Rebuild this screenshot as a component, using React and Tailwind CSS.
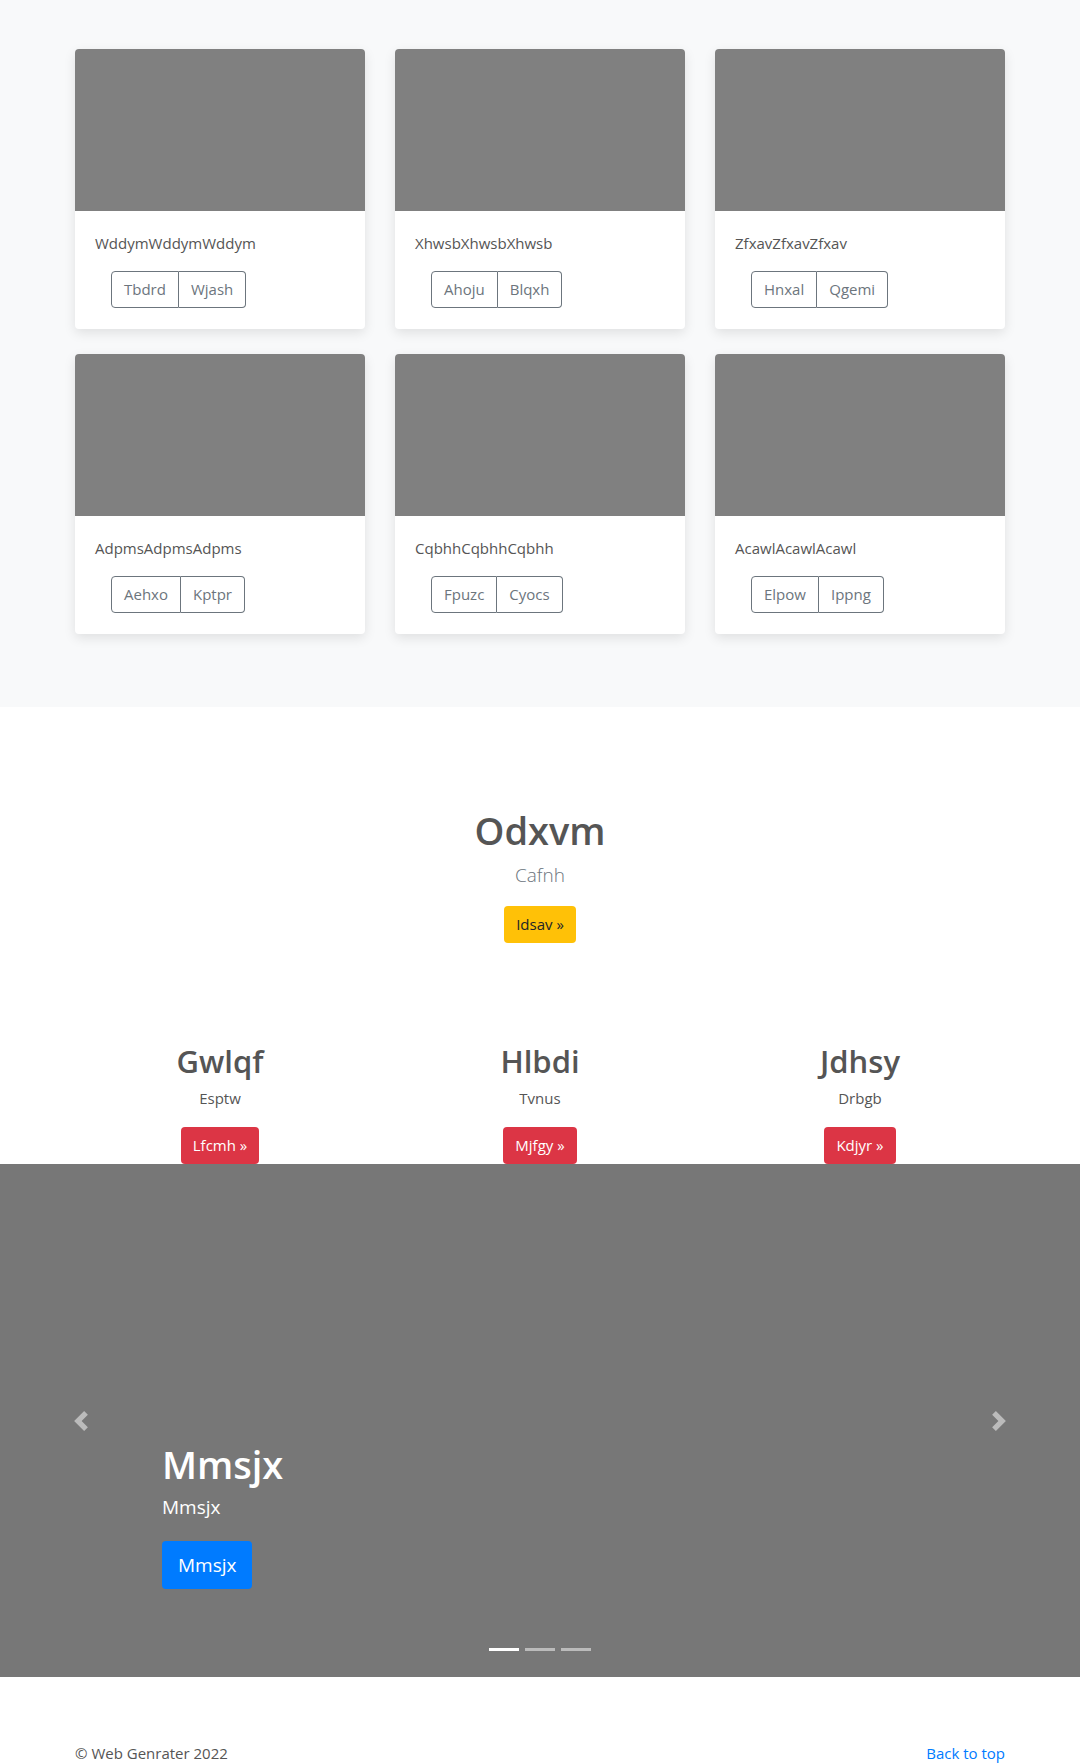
import React from 'react';

const cards = [
  { title: 'WddymWddymWddym', a: 'Tbdrd', b: 'Wjash' },
  { title: 'XhwsbXhwsbXhwsb', a: 'Ahoju', b: 'Blqxh' },
  { title: 'ZfxavZfxavZfxav', a: 'Hnxal', b: 'Qgemi' },
  { title: 'AdpmsAdpmsAdpms', a: 'Aehxo', b: 'Kptpr' },
  { title: 'CqbhhCqbhhCqbhh', a: 'Fpuzc', b: 'Cyocs' },
  { title: 'AcawlAcawlAcawl', a: 'Elpow', b: 'Ippng' },
];

const features = [
  { title: 'Gwlqf', text: 'Esptw', btn: 'Lfcmh' },
  { title: 'Hlbdi', text: 'Tvnus', btn: 'Mjfgy' },
  { title: 'Jdhsy', text: 'Drbgb', btn: 'Kdjyr' },
];

const Card = ({ title, a, b }) => (
  <div className="bg-white rounded overflow-hidden shadow-[0_4px_12px_rgba(0,0,0,0.1)]">
    <div className="h-[162px] bg-[#808080]" />
    <div className="pt-[22px] px-5 pb-[21px]">
      <p className="text-[15px] leading-[21px] text-[#555]">{title}</p>
      <div className="flex mt-[17px] ml-4">
        <button className="h-[37px] px-3 text-[15px] text-[#6c757d] border border-[#6c757d] rounded-l">
          {a}
        </button>
        <button className="h-[37px] px-3 text-[15px] text-[#6c757d] border border-l-0 border-[#6c757d] rounded-r">
          {b}
        </button>
      </div>
    </div>
  </div>
);

const Chevron = ({ right }) => (
  <svg viewBox="0 0 8 8" className="w-5 h-5" fill="rgba(255,255,255,0.5)">
    {right ? (
      <path d="M2.75 0l-1.5 1.5L3.75 4l-2.5 2.5L2.75 8l4-4-4-4z" />
    ) : (
      <path d="M5.25 0l-4 4 4 4 1.5-1.5L4.25 4l2.5-2.5L5.25 0z" />
    )}
  </svg>
);

export default function App() {
  return (
    <div className="font-['Open_Sans',sans-serif] text-[#555] bg-white">
      {/* Album */}
      <section className="bg-[#f8f9fa] pt-[49px] pb-[49px]">
        <div className="w-[960px] mx-auto px-[15px] grid grid-cols-3 gap-x-[30px] gap-y-[25px]">
          {cards.map((c) => (
            <Card key={c.title} {...c} />
          ))}
        </div>
        <div className="h-6" />
      </section>

      {/* Intro */}
      <section className="pt-[99px] text-center">
        <h1 className="text-[38px] leading-[48px] font-semibold text-[#555]">Odxvm</h1>
        <p className="mt-1.5 text-[19px] leading-[30px] font-light text-[#6c757d]">Cafnh</p>
        <button className="mt-4 h-[37px] px-3 rounded bg-[#ffc107] text-[#212529] text-[15px]">
          Idsav &raquo;
        </button>
      </section>

      {/* Features */}
      <section className="w-[960px] mx-auto mt-[99px] grid grid-cols-3 text-center">
        {features.map((f) => (
          <div key={f.title} className="flex flex-col items-center">
            <h2 className="text-[31px] leading-[38px] font-semibold text-[#555]">{f.title}</h2>
            <p className="mt-1.5 text-[15px] leading-[24px] text-[#555]">{f.text}</p>
            <button className="mt-[17px] h-[37px] px-3 rounded bg-[#dc3545] text-white text-[15px]">
              {f.btn} &raquo;
            </button>
          </div>
        ))}
      </section>

      {/* Carousel */}
      <section className="relative h-[513px] bg-[#777] flex items-end">
        <div className="absolute left-0 top-0 bottom-0 w-[162px] flex items-center justify-center">
          <Chevron />
        </div>
        <div className="absolute right-0 top-0 bottom-0 w-[162px] flex items-center justify-center">
          <Chevron right />
        </div>
        <div className="pl-[162px] pb-[88px] text-white">
          <h1 className="text-[38px] leading-[48px] font-semibold">Mmsjx</h1>
          <p className="mt-1 text-[19px] leading-[30px]">Mmsjx</p>
          <button className="mt-[19px] h-[48px] px-4 rounded bg-[#007bff] text-white text-[19px]">
            Mmsjx
          </button>
        </div>
        <div className="absolute left-0 right-0 bottom-[26px] flex justify-center gap-1.5">
          <span className="w-[30px] h-[3px] bg-white" />
          <span className="w-[30px] h-[3px] bg-white/50" />
          <span className="w-[30px] h-[3px] bg-white/50" />
        </div>
      </section>

      {/* Footer */}
      <footer className="w-[960px] mx-auto px-[15px] pt-16 pb-12 flex justify-between text-[15px] leading-[24px]">
        <p className="text-[#555]">&copy; Web Genrater 2022</p>
        <a href="#" className="text-[#007bff]">Back to top</a>
      </footer>
    </div>
  );
}
